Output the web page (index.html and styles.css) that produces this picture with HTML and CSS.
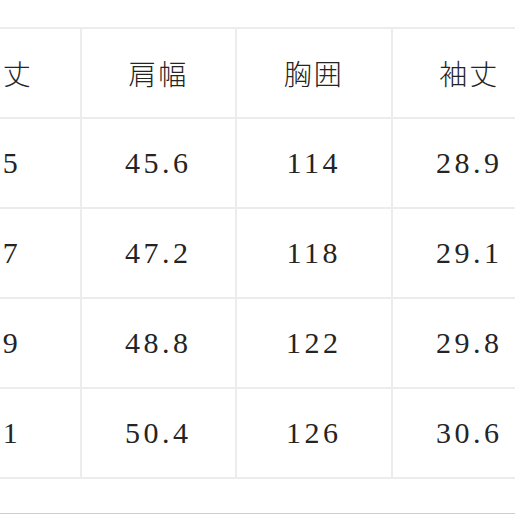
FILE: index.html
```html
<!DOCTYPE html>
<html lang="ja">
<head>
<meta charset="utf-8">
<link rel="stylesheet" href="styles.css">
</head>
<body>
<div class="frame">
  <table class="size-table">
    <thead>
      <tr><th>着丈</th><th>肩幅</th><th>胸囲</th><th>袖丈</th></tr>
    </thead>
    <tbody>
      <tr><td>65</td><td>45.6</td><td>114</td><td>28.9</td></tr>
      <tr><td>67</td><td>47.2</td><td>118</td><td>29.1</td></tr>
      <tr><td>69</td><td>48.8</td><td>122</td><td>29.8</td></tr>
      <tr><td>71</td><td>50.4</td><td>126</td><td>30.6</td></tr>
    </tbody>
  </table>
  <div class="rule"></div>
</div>
</body>
</html>
```
FILE: styles.css
```css
html, body {
  margin: 0;
  padding: 0;
  background: #ffffff;
}
.frame {
  width: 515px;
  height: 515px;
  overflow: hidden;
  display: flex;
  flex-direction: column;
}
.size-table {
  margin-top: 27px;
  margin-left: -76px;
  border-collapse: collapse;
  table-layout: fixed;
  width: 622px;
  flex: none;
  color: #242424;
}
.size-table th,
.size-table td {
  width: 153.5px;
  height: 88px;
  padding: 0;
  border: 2px solid #ececec;
  text-align: center;
  vertical-align: middle;
}
.size-table th {
  font-family: "Noto Sans CJK JP", sans-serif;
  font-weight: 300;
  font-size: 28px;
  letter-spacing: 2px;
}
.size-table td {
  font-family: "Liberation Serif", serif;
  font-weight: 400;
  font-size: 30px;
  letter-spacing: 3.5px;
}
.rule {
  margin-top: 34px;
  height: 1px;
  background: #cfcfcf;
  flex: none;
}
```
